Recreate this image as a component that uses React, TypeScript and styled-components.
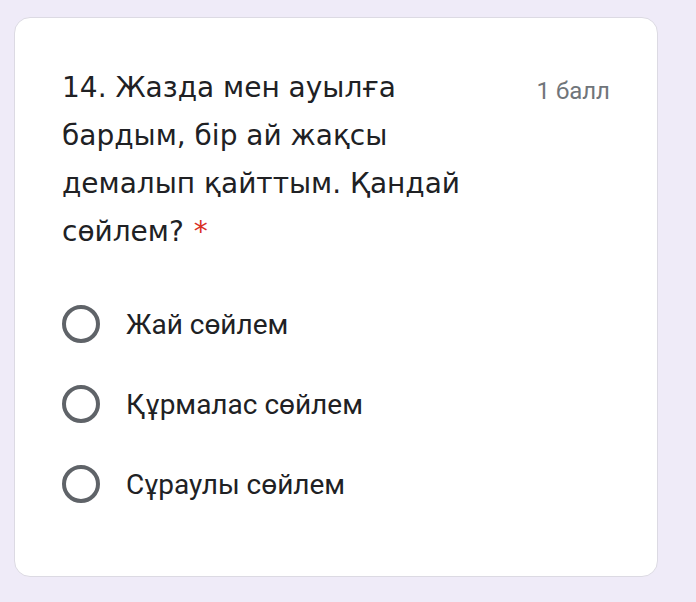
import React from "react";
import styled, { createGlobalStyle } from "styled-components";

const Global = createGlobalStyle`
  html, body { margin: 0; padding: 0; background: #efebf8; }
  body { width: 696px; height: 602px; overflow: hidden; }
`;

const Page = styled.div`
  box-sizing: border-box;
  width: 696px;
  height: 602px;
  padding: 17px 38px 25px 14px;
  background: #efebf8;
`;

const Card = styled.div`
  box-sizing: border-box;
  height: 560px;
  background: #ffffff;
  border: 1px solid #dcdae3;
  border-radius: 16px;
  padding: 46px 47px 0 47px;
  display: flex;
  flex-direction: column;
`;

const Header = styled.div`
  display: flex;
  align-items: flex-start;
  justify-content: space-between;
`;

const Question = styled.div`
  font-family: "DejaVu Sans", Inter, sans-serif;
  font-size: 28px;
  line-height: 48px;
  color: #202124;
`;

const Star = styled.span`
  color: #d93025;
  margin-left: 10px;
`;

const Points = styled.div`
  font-family: Roboto, sans-serif;
  font-size: 24px;
  line-height: 48px;
  color: #70757a;
  white-space: nowrap;
  padding-top: 3px;
`;

const Options = styled.div`
  display: flex;
  flex-direction: column;
  gap: 42px;
  margin-top: 49px;
`;

const Option = styled.label`
  display: flex;
  align-items: center;
  gap: 26px;
  font-family: Roboto, sans-serif;
  font-size: 28px;
  color: #202124;
  height: 38px;
`;

const Radio = styled.span`
  box-sizing: border-box;
  width: 38px;
  height: 38px;
  border-radius: 50%;
  border: 4px solid #5f6368;
  flex: none;
`;

const options = ["Жай сөйлем", "Құрмалас сөйлем", "Сұраулы сөйлем"];

export default function App() {
  return (
    <>
      <Global />
      <Page>
        <Card>
          <Header>
            <Question>
              14. Жазда мен ауылға
              <br />
              бардым, бір ай жақсы
              <br />
              демалып қайттым. Қандай
              <br />
              сөйлем?<Star>*</Star>
            </Question>
            <Points>1 балл</Points>
          </Header>
          <Options>
            {options.map((o) => (
              <Option key={o}>
                <Radio />
                {o}
              </Option>
            ))}
          </Options>
        </Card>
      </Page>
    </>
  );
}
